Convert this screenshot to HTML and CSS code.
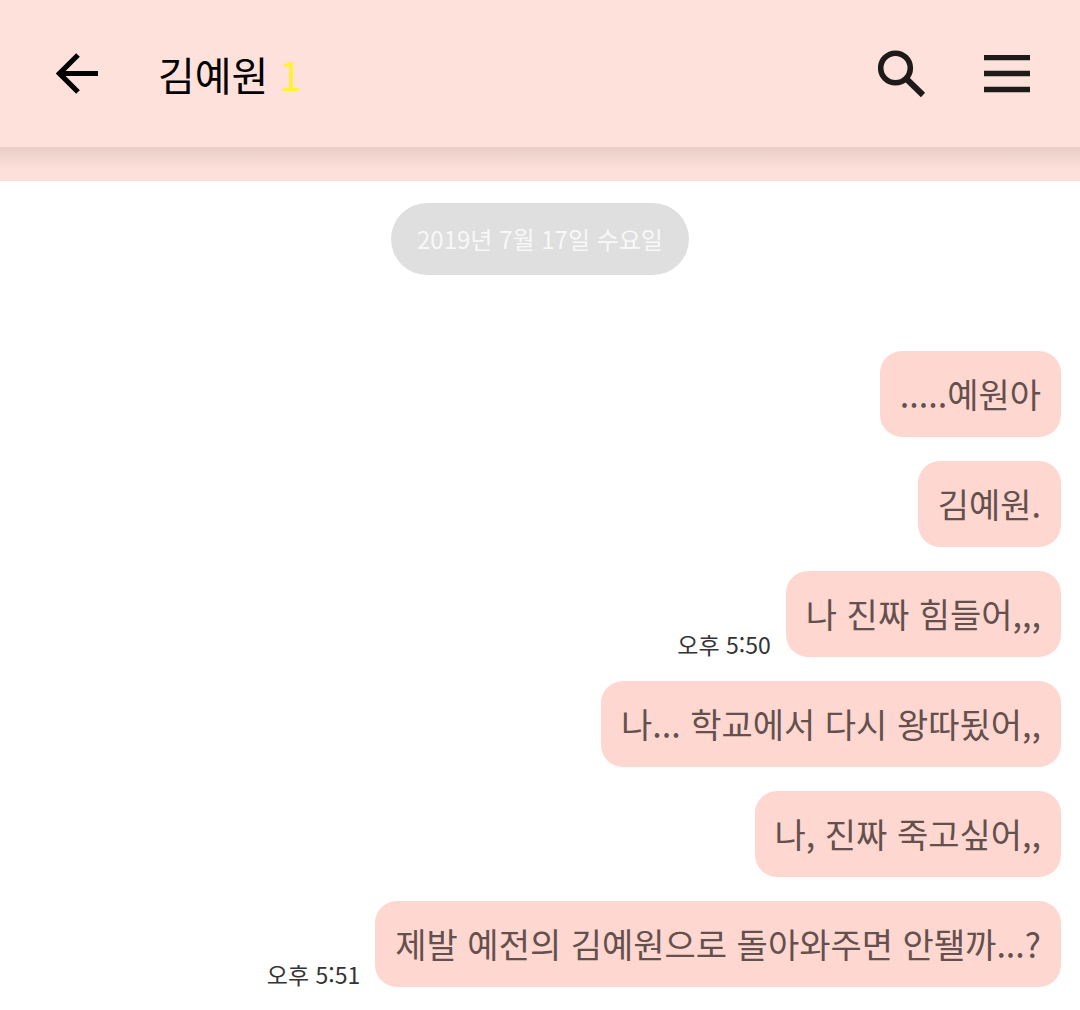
FILE: index.html
```html
<!DOCTYPE html>
<html lang="ko">
<head>
    <meta charset="UTF-8">
    <meta name="viewport" content="width=device-width, initial-scale=1.0">
    <title>김예원</title>
    <link rel="stylesheet" href="styles.css">
</head>
<body>
    <header class="topo">
        <button type="button" class="icone voltar" aria-label="뒤로">
            <svg width="42" height="42" viewBox="0 0 42 42">
                <path d="M22 2L3.500 20.500L22 39M4 20.500H42" fill="none" stroke="#000" stroke-width="5.200"/>
            </svg>
        </button>
        <h1 class="nome">김예원 <span class="contador">1</span></h1>
        <button type="button" class="icone" aria-label="검색">
            <svg width="48" height="48" viewBox="0 0 48 48">
                <circle cx="17.500" cy="18" r="14.800" fill="none" stroke="#1e1a18" stroke-width="5.600"/>
                <path d="M27.500 28L45 45" stroke="#1e1a18" stroke-width="6"/>
            </svg>
        </button>
        <button type="button" class="icone menu" aria-label="메뉴">
            <svg width="46" height="38" viewBox="0 0 46 38">
                <path d="M0 2.500H46M0 18.500H46M0 34.500H46" stroke="#1e1a18" stroke-width="5.400"/>
            </svg>
        </button>
    </header>
    <div class="sombra"></div>

    <main class="conversa">
        <p class="data">2019년 7월 17일 수요일</p>
        <ul class="mensagens">
            <li class="enviado"><p class="balao">.....예원아</p></li>
            <li class="enviado"><p class="balao">김예원.</p></li>
            <li class="enviado">
                <time class="hora" datetime="17:50">오후 5:50</time>
                <p class="balao">나 진짜 힘들어,,,</p>
            </li>
            <li class="enviado"><p class="balao">나... 학교에서 다시 왕따됬어,,</p></li>
            <li class="enviado"><p class="balao">나, 진짜 죽고싶어,,</p></li>
            <li class="enviado">
                <time class="hora" datetime="17:51">오후 5:51</time>
                <p class="balao">제발 예전의 김예원으로 돌아와주면 안됄까...?</p>
            </li>
        </ul>
    </main>
</body>
</html>
```
FILE: styles.css
```css
body {
    font-family: "Noto Sans CJK KR", sans-serif;
    background-color: white;
    margin: 0;
    padding: 0;
}

/* Barra superior */
.topo {
    display: flex;
    align-items: center;
    box-sizing: border-box;
    min-height: 147px;
    padding: 0 50px 0 56px;
    background-color: #fee1db;
}

.icone {
    display: flex;
    padding: 0;
    border: none;
    background: none;
    cursor: pointer;
}

.voltar {
    margin-right: 60px;
}

.menu {
    margin-left: 58px;
}

.nome {
    flex: 1;
    margin: 0;
    font-size: 40px;
    line-height: 56px;
    font-weight: 400;
    color: black;
}

.contador {
    color: #fff133;
}

/* Faixa com a sombra da barra */
.sombra {
    height: 34px;
    background: linear-gradient(#e9cdc7, #fde0da 22px);
}

.conversa {
    display: flex;
    flex-direction: column;
    align-items: center;
    padding: 22px 19px;
}

.data {
    margin: 0 0 76px;
    padding: 18px 26px;
    border-radius: 40px;
    background-color: #dfdfdf;
    color: #f8f8f8;
    font-size: 24px;
    line-height: 36px;
}

.mensagens {
    display: flex;
    flex-direction: column;
    gap: 24px;
    width: 100%;
    margin: 0;
    padding: 0;
    list-style-type: none;
}

.enviado {
    display: flex;
    justify-content: flex-end;
    align-items: flex-end;
    gap: 15px;
}

.balao {
    margin: 0;
    padding: 18px 20px;
    border-radius: 22px;
    background-color: #ffd7d1;
    color: #64504c;
    font-size: 34px;
    line-height: 50px;
}

.hora {
    flex-shrink: 0;
    color: #333;
    font-size: 23px;
    line-height: 26px;
}
```
